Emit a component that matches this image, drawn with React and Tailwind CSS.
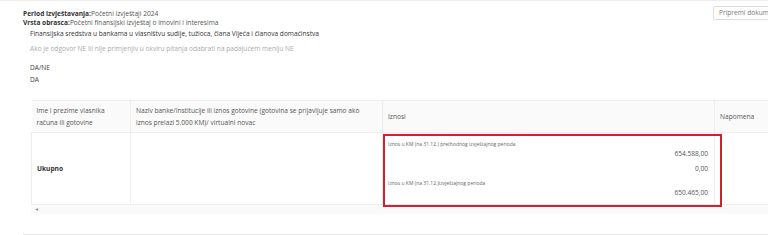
import React from "react";

export default function App() {
  return (
    <div className="w-[768px] h-[235px] overflow-hidden bg-white text-[#555] font-['Open_Sans',sans-serif] border-t border-[#eee]">
      <div className="flex justify-between pl-[23px] pt-[8px]">
        <div className="text-[6.6px] leading-[9px]">
          <p><span className="font-bold text-[#333]">Period izvještavanja:</span>Početni izvještaji 2024</p>
          <p><span className="font-bold text-[#333]">Vrsta obrasca:</span>Početni finansijski izvještaj o imovini i interesima</p>
        </div>
        <button className="self-start shrink-0 w-[70px] h-[14px] -mt-[3px] -mr-[15px] pl-[5px] text-left border border-[#ddd] rounded-[2px] text-[6.6px] text-[#777] whitespace-nowrap overflow-hidden">
          Pripremi dokument
        </button>
      </div>

      <div className="pl-[30px] text-[6.6px] leading-[9px]">
        <p className="mt-[1.5px] text-[#333]">Finansijska sredstva u bankama u vlasništvu sudije, tužioca, člana Vijeća i članova domaćinstva</p>
        <p className="mt-[6.5px] text-[#aaa]">Ako je odgovor NE ili nije primjenjiv u okviru pitanja odabrati na padajućem meniju NE</p>
        <p className="mt-[10px] text-[#444]">DA/NE</p>
        <p className="mt-[3px] text-[#444]">DA</p>
      </div>

      <div className="ml-[31px] mt-[16px] overflow-hidden">
        <table className="w-[780px] border-collapse text-[6.6px] leading-[12px] table-fixed">
          <colgroup>
            <col className="w-[99px]" />
            <col className="w-[252px]" />
            <col className="w-[332px]" />
            <col />
          </colgroup>
          <thead>
            <tr className="bg-[#fafafa] h-[32px] text-[#555] text-left">
              <th className="font-normal px-[5px] border-t border-r border-[#eee] align-middle">Ime i prezime vlasnika računa ili gotovine</th>
              <th className="font-normal pl-[5px] pr-[14px] border-t border-r border-[#eee] align-middle">Naziv banke/institucije ili iznos gotovine (gotovina se prijavljuje samo ako iznos prelazi 5.000 KM)/ virtualni novac</th>
              <th className="font-normal px-[5px] border-t border-r border-[#eee] align-middle">Iznosi</th>
              <th className="font-normal px-[5px] border-t border-[#eee] align-middle">Napomena</th>
            </tr>
          </thead>
          <tbody>
            <tr className="h-[72px]">
              <td className="px-[5px] border-t border-b border-r border-l border-[#eee] font-bold text-[#333]">Ukupno</td>
              <td className="border-t border-b border-r border-[#eee]"></td>
              <td className="border-t border-b border-r border-[#eee] p-0 align-top">
                {/* highlight around the amounts */}
                <div className="relative -mr-[8px] mt-[1px] -mb-[6px] h-[73px] border-2 border-[#d3202f] px-[3px] text-[5px] leading-[7px] text-[#666]">
                  <p className="mt-[4.5px]">Iznos u KM (na 31.12.) prethodnog izvještajnog perioda</p>
                  <p className="mt-[2.5px] text-right text-[6.6px] leading-[8px] pr-[9px] text-[#555]">654.588,00</p>
                  <p className="mt-[7px] text-right text-[6.6px] leading-[8px] pr-[9px] text-[#555]">0,00</p>
                  <p className="mt-[6.5px]">Iznos u KM (na 31.12.)izvještajnog perioda</p>
                  <p className="mt-[2.5px] text-right text-[6.6px] leading-[8px] pr-[9px] text-[#555]">650.465,00</p>
                </div>
              </td>
              <td className="border-t border-b border-[#eee]"></td>
            </tr>
          </tbody>
        </table>
        <div className="h-[9px] bg-[#fafafa] flex items-center pl-[3px] text-[5px] text-[#999]">◄</div>
      </div>

      <div className="ml-[23px] mt-[20px] border-t border-[#e5e5e5]"></div>
    </div>
  );
}
